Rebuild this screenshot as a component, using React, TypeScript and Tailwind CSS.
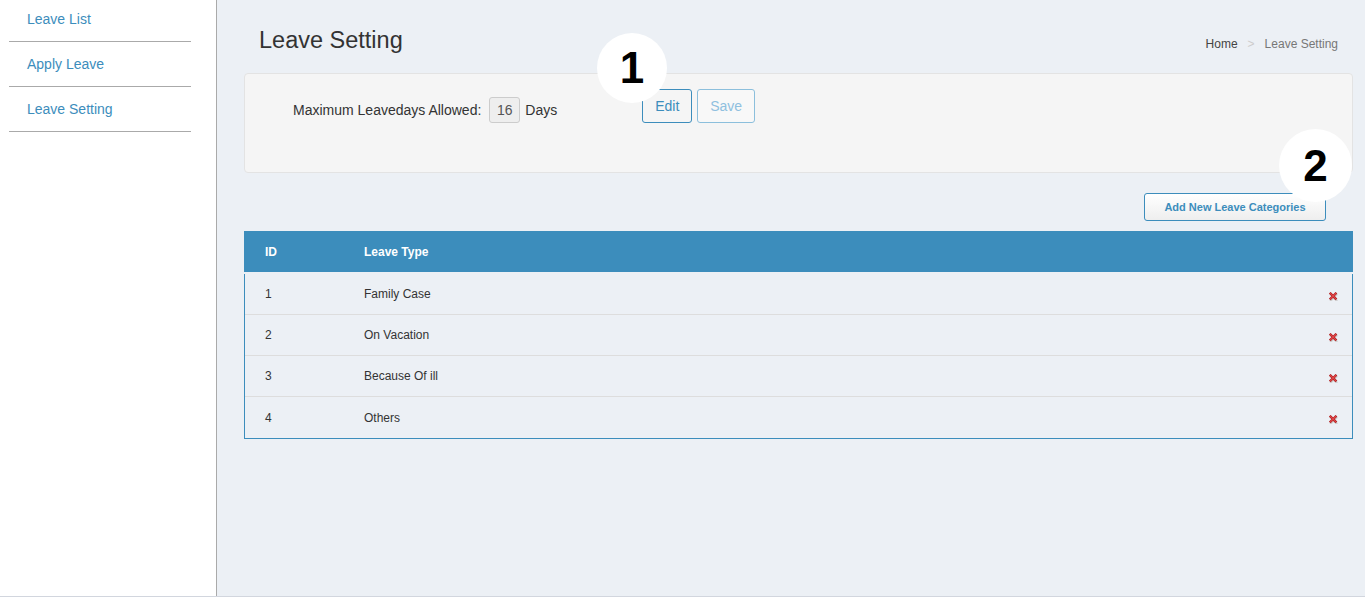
const sideLinks = ["Leave List", "Apply Leave", "Leave Setting"];

const leaveTypes = [
  { id: 1, name: "Family Case" },
  { id: 2, name: "On Vacation" },
  { id: 3, name: "Because Of ill" },
  { id: 4, name: "Others" },
];

function DeleteIcon() {
  return (
    <svg width="9" height="9" viewBox="0 0 9 9" className="block">
      <path d="M2 2.8 L7.4 8.2 M7.4 2.8 L2 8.2" stroke="#cfcfcf" strokeWidth="2.2" strokeLinecap="square" />
      <path d="M1.6 1.6 L6.6 6.6 M6.6 1.6 L1.6 6.6" stroke="#b02222" strokeWidth="2.4" strokeLinecap="square" />
      <path d="M1.6 1.6 L6.6 6.6 M6.6 1.6 L1.6 6.6" stroke="#e2474a" strokeWidth="1.1" strokeLinecap="square" />
    </svg>
  );
}

function Marker({ n, className }: { n: string; className: string }) {
  return (
    <div
      className={`absolute flex items-center justify-center rounded-full bg-white font-bold leading-none text-black ${className}`}
    >
      {n}
    </div>
  );
}

export default function App() {
  return (
    <div className="flex h-[597px] w-[1365px] overflow-hidden border-b border-[#d2d6de] font-['Liberation_Sans',Arial,sans-serif]">
      <aside className="w-[217px] shrink-0 border-r border-[#aaaaaa] bg-white pl-[9px] pr-[25px]">
        <ul className="-mt-[3px]">
          {sideLinks.map((l) => (
            <li
              key={l}
              className="flex h-[45px] items-center border-b border-[#aaaaaa] pl-[18px] text-[14px] text-[#3c8dbc]"
            >
              {l}
            </li>
          ))}
        </ul>
      </aside>

      <main className="relative flex-1 bg-[#ecf0f5] pl-[27px] pr-[12px]">
        <div className="flex items-baseline justify-between pt-[26px]">
          <h1 className="pl-[15px] text-[23.5px] leading-[28px] text-[#333]">Leave Setting</h1>
          <div className="flex items-baseline gap-[10px] pr-[15px] text-[12px]">
            <span className="text-[#444]">Home</span>
            <span className="text-[#ccc]">&gt;</span>
            <span className="text-[#777]">Leave Setting</span>
          </div>
        </div>

        <div className="mt-[19px] h-[100px] rounded-[4px] border border-[#e3e3e3] bg-[#f5f5f5] pl-[48px] pt-[15px]">
          <div className="flex items-end">
            <div className="flex items-center text-[14px] text-[#333]">
              <span>Maximum Leavedays Allowed:</span>
              <span className="ml-[8px] flex h-[26px] w-[31px] items-center justify-center rounded-[3px] border border-[#ccc] bg-[#eeeeee] text-[#555]">
                16
              </span>
              <span className="ml-[5px]">Days</span>
            </div>
            <button className="ml-[85px] h-[34px] w-[50px] rounded-[3px] border border-[#3c8dbc] bg-[#f5f5f5] text-[14px] text-[#3c8dbc]">
              Edit
            </button>
            <button className="ml-[5px] h-[34px] w-[58px] rounded-[3px] border border-[#8cbfdc] bg-[#f8f8f8] text-[14px] text-[#8fc0df]">
              Save
            </button>
          </div>
        </div>

        <div className="mt-[20px] flex justify-end pr-[27px]">
          <button className="h-[28px] w-[182px] rounded-[3px] border border-[#3c8dbc] bg-gradient-to-b from-white to-[#eeeeee] text-[11px] font-bold text-[#3c8dbc]">
            Add New Leave Categories
          </button>
        </div>

        <div className="mt-[10px]">
          <div className="flex h-[41px] items-center bg-[#3c8dbc] text-[12px] font-bold text-white">
            <div className="w-[120px] pl-[21px]">ID</div>
            <div>Leave Type</div>
          </div>
          <div className="mt-[2px] border-x border-b border-[#3c8dbc]">
            {leaveTypes.map((t, i) => (
              <div
                key={t.id}
                className={`flex h-[41px] items-center text-[12px] text-[#333] ${
                  i < leaveTypes.length - 1 ? "border-b border-[#dddddd]" : "h-[40px]"
                }`}
              >
                <div className="w-[119px] pl-[20px]">{t.id}</div>
                <div className="flex-1">{t.name}</div>
                <div className="pr-[14px] pt-[4px]">
                  <DeleteIcon />
                </div>
              </div>
            ))}
          </div>
        </div>

        <Marker n="1" className="left-[380px] top-[33px] h-[70px] w-[70px] text-[44px]" />
        <Marker n="2" className="left-[1062px] top-[129px] h-[73px] w-[73px] text-[44px]" />
      </main>
    </div>
  );
}
